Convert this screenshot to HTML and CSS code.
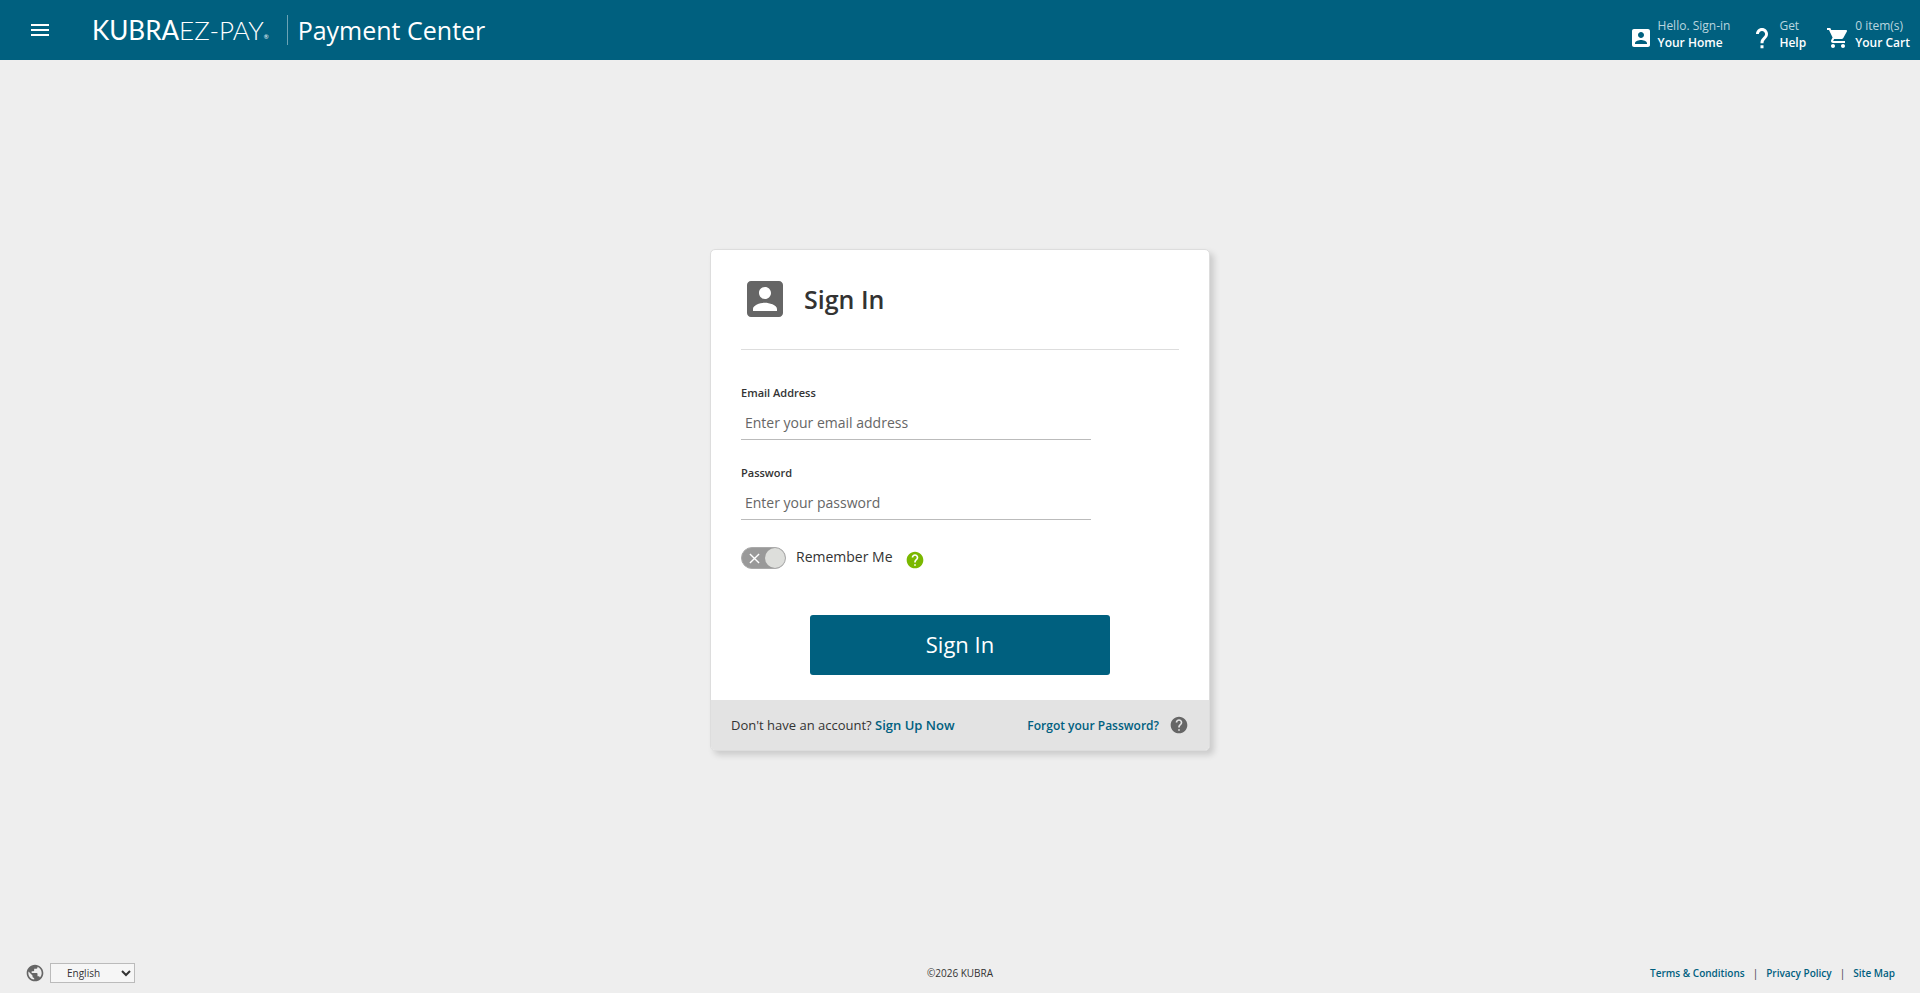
FILE: index.html
```html
<!DOCTYPE html>
<html lang="en">
<head>
    <meta charset="UTF-8">
    <meta name="viewport" content="width=device-width, initial-scale=1.0">
    <title>Sign In - Payment Center</title>
    <link rel="stylesheet" href="styles.css">
</head>
<body>
    <header class="header">
        <div class="header-left">
            <button class="menu-btn" type="button" aria-label="Menu">
                <svg class="icon" viewBox="0 0 24 24"><path d="M3 18h18v-2H3v2zm0-5h18v-2H3v2zm0-7v2h18V6H3z"/></svg>
            </button>
            <a class="logo" href="#"><span class="logo-kubra">KUBRA</span><span class="logo-ezpay">EZ-PAY</span><sup class="logo-reg">®</sup></a>
            <span class="header-title">Payment Center</span>
        </div>
        <nav class="header-nav">
            <a class="nav-item" href="#">
                <svg class="icon" viewBox="0 0 24 24"><path d="M3 5v14c0 1.1.89 2 2 2h14c1.1 0 2-.9 2-2V5c0-1.1-.9-2-2-2H5c-1.11 0-2 .9-2 2zm12 4c0 1.66-1.34 3-3 3s-3-1.34-3-3 1.34-3 3-3 3 1.34 3 3zm-9 8c0-2 4-3.100 6-3.100s6 1.100 6 3.100v1H6v-1z"/></svg>
                <span class="nav-text"><span class="nav-small">Hello. Sign-in</span><strong>Your Home</strong></span>
            </a>
            <a class="nav-item" href="#">
                <svg class="icon" viewBox="0 0 24 24"><path d="M10.500 19.200h3v3h-3zM12 2C8.690 2 6 4.690 6 8h2.900c0-1.710 1.390-3.100 3.100-3.100s3.100 1.390 3.100 3.100c0 3-4.600 3.700-4.600 9.200h3c0-3.900 4.500-4.700 4.500-9.200 0-3.310-2.690-6-6-6z"/></svg>
                <span class="nav-text"><span class="nav-small">Get</span><strong>Help</strong></span>
            </a>
            <a class="nav-item" href="#">
                <svg class="icon" viewBox="0 0 24 24"><path d="M7 18c-1.100 0-1.990.9-1.990 2S5.900 22 7 22s2-.9 2-2-.9-2-2-2zM1 2v2h2l3.600 7.590-1.350 2.450c-.16.280-.25.610-.25.960 0 1.100.9 2 2 2h12v-2H7.420c-.14 0-.25-.11-.25-.25l.03-.12.9-1.630h7.450c.75 0 1.410-.41 1.750-1.030l3.580-6.490c.08-.14.120-.31.120-.48 0-.55-.45-1-1-1H5.210l-.94-2H1zm16 16c-1.100 0-1.990.9-1.990 2s.89 2 1.990 2 2-.9 2-2-.9-2-2-2z"/></svg>
                <span class="nav-text"><span class="nav-small">0 item(s)</span><strong>Your Cart</strong></span>
            </a>
        </nav>
    </header>

    <main class="main">
        <form class="card">
            <div class="card-body">
                <div class="card-head">
                    <svg class="card-icon" viewBox="0 0 24 24"><path d="M3 5v14c0 1.1.89 2 2 2h14c1.1 0 2-.9 2-2V5c0-1.1-.9-2-2-2H5c-1.11 0-2 .9-2 2zm12 4c0 1.66-1.34 3-3 3s-3-1.34-3-3 1.34-3 3-3 3 1.34 3 3zm-9 8c0-2 4-3.100 6-3.100s6 1.100 6 3.100v1H6v-1z"/></svg>
                    <h1>Sign In</h1>
                </div>

                <div class="field">
                    <label for="email">Email Address</label>
                    <input type="email" id="email" placeholder="Enter your email address">
                </div>
                <div class="field">
                    <label for="password">Password</label>
                    <input type="password" id="password" placeholder="Enter your password">
                </div>

                <div class="remember">
                    <span class="toggle">
                        <input type="checkbox" id="remember">
                        <svg class="toggle-x" viewBox="0 0 12 12"><path d="M1 1l10 10M11 1L1 11"/></svg>
                    </span>
                    <label for="remember">Remember Me</label>
                    <button class="help-btn green" type="button" aria-label="About Remember Me">
                        <svg viewBox="0 0 24 24"><path d="M12 2C6.480 2 2 6.480 2 12s4.480 10 10 10 10-4.480 10-10S17.520 2 12 2zm1 17h-2v-2h2v2zm2.070-7.750l-.9.920C13.450 12.900 13 13.500 13 15h-2v-.5c0-1.100.45-2.100 1.170-2.830l1.240-1.260c.37-.36.590-.86.590-1.410 0-1.100-.9-2-2-2s-2 .9-2 2H8c0-2.210 1.790-4 4-4s4 1.790 4 4c0 .88-.36 1.680-.93 2.250z"/></svg>
                    </button>
                </div>

                <button class="submit-btn" type="button">Sign In</button>
            </div>

            <div class="card-foot">
                <p>Don't have an account? <a href="#">Sign Up Now</a></p>
                <div class="forgot">
                    <a href="#">Forgot your Password?</a>
                    <button class="help-btn" type="button" aria-label="Password help">
                        <svg viewBox="0 0 24 24"><path d="M12 2C6.480 2 2 6.480 2 12s4.480 10 10 10 10-4.480 10-10S17.520 2 12 2zm1 17h-2v-2h2v2zm2.070-7.750l-.9.920C13.450 12.900 13 13.500 13 15h-2v-.5c0-1.100.45-2.100 1.170-2.830l1.240-1.260c.37-.36.590-.86.590-1.410 0-1.100-.9-2-2-2s-2 .9-2 2H8c0-2.210 1.790-4 4-4s4 1.790 4 4c0 .88-.36 1.680-.93 2.250z"/></svg>
                    </button>
                </div>
            </div>
        </form>
    </main>

    <footer class="footer">
        <div class="language">
            <svg class="globe" viewBox="0 0 24 24"><path d="M12 2C6.480 2 2 6.480 2 12s4.480 10 10 10 10-4.480 10-10S17.520 2 12 2zm-1 17.930c-3.950-.49-7-3.850-7-7.930 0-.62.080-1.210.210-1.790L9 15v1c0 1.100.9 2 2 2v1.930zm6.900-2.540c-.26-.81-1-1.390-1.900-1.390h-1v-3c0-.55-.45-1-1-1H8v-2h2c.55 0 1-.45 1-1V7h2c1.100 0 2-.9 2-2v-.41c2.930 1.190 5 4.060 5 7.410 0 2.080-.8 3.970-2.100 5.390z"/></svg>
            <select aria-label="Language">
                <option>English</option>
            </select>
        </div>
        <p class="copyright">©2026 KUBRA</p>
        <nav class="footer-links">
            <a href="#">Terms &amp; Conditions</a>
            <span>|</span>
            <a href="#">Privacy Policy</a>
            <span>|</span>
            <a href="#">Site Map</a>
        </nav>
    </footer>
</body>
</html>
```

FILE: styles.css
```css
* {
    margin: 0;
    padding: 0;
    box-sizing: border-box;
}

body {
    display: flex;
    flex-direction: column;
    min-height: 100vh;
    font-family: 'Open Sans', sans-serif;
    font-size: 14px;
    background: #eeeeee;
    color: #333333;
}

a {
    color: #00607f;
    font-weight: 600;
    text-decoration: none;
}

button {
    border: none;
    background: none;
    font-family: inherit;
    cursor: pointer;
}

svg {
    display: block;
    fill: currentColor;
}

.icon {
    width: 24px;
    height: 24px;
}

/* Header */
.header {
    display: flex;
    justify-content: space-between;
    height: 60px;
    padding: 0 10px 0 28px;
    background: #00607f;
    color: #ffffff;
}

.header a {
    color: #ffffff;
}

.header-left {
    display: flex;
    align-items: center;
}

.menu-btn {
    color: #ffffff;
}

.logo {
    display: flex;
    align-items: center;
    margin-left: 40px;
    font-family: Lato, sans-serif;
    font-size: 26px;
    line-height: 30px;
}

.logo-kubra {
    font-weight: 400;
}

.logo-ezpay {
    font-weight: 300;
}

.logo-reg {
    align-self: flex-end;
    font-size: 6px;
    line-height: 16px;
    font-weight: 400;
}

.header-title {
    margin-left: 18px;
    padding-left: 10px;
    border-left: 1px solid #6ba3b5;
    font-size: 25px;
    line-height: 30px;
}

.header-nav {
    display: flex;
    align-items: flex-start;
    gap: 20px;
    padding-top: 17px;
}

.nav-item {
    display: flex;
    align-items: flex-end;
    gap: 5px;
    font-size: 12px;
    line-height: 17px;
}

.nav-item .icon {
    margin-bottom: 1px;
}

.nav-text {
    display: flex;
    flex-direction: column;
}

.nav-small {
    font-weight: 400;
    color: #b9d6df;
}

.nav-text strong {
    font-weight: 600;
}

/* Sign in card */
.main {
    flex: 1;
    display: flex;
    align-items: center;
    justify-content: center;
}

.card {
    width: 500px;
    border: 1px solid #dddddd;
    border-radius: 5px;
    background: #ffffff;
    box-shadow: 4px 4px 6px rgba(0, 0, 0, 0.15);
    overflow: hidden;
}

.card-body {
    padding: 0 30px 25px;
}

.card-head {
    display: flex;
    align-items: center;
    gap: 15px;
    height: 100px;
    padding-bottom: 2px;
    border-bottom: 1px solid #dddddd;
}

.card-icon {
    width: 48px;
    height: 48px;
    color: #666666;
}

.card-head h1 {
    font-size: 25px;
    font-weight: 600;
}

.field {
    display: flex;
    flex-direction: column;
    max-width: 350px;
    margin-top: 20px;
}

.card-head + .field {
    margin-top: 30px;
}

.field label {
    font-size: 11px;
    line-height: 25px;
    font-weight: 600;
}

.field input {
    height: 35px;
    padding: 0 4px;
    border: none;
    border-bottom: 1px solid #bbbbbb;
    background: none;
    font-family: inherit;
    font-size: 14px;
    color: #333333;
    outline: none;
}

.field input::placeholder {
    color: #666666;
}

.remember {
    display: flex;
    align-items: center;
    margin-top: 25px;
    height: 25px;
}

.toggle {
    position: relative;
    width: 45px;
    height: 22px;
}

.toggle input {
    display: flex;
    justify-content: flex-end;
    width: 45px;
    height: 22px;
    appearance: none;
    border: 1px solid #aaaaaa;
    border-radius: 11px;
    background: #999999;
    cursor: pointer;
}

.toggle input::after {
    content: "";
    width: 20px;
    height: 20px;
    border-radius: 50%;
    background: #dddedb;
}

.toggle-x {
    position: absolute;
    left: 8px;
    top: 6px;
    width: 11px;
    height: 11px;
    stroke: #ffffff;
    stroke-width: 1.5;
    pointer-events: none;
}

.remember label {
    margin: 0 12px 0 10px;
    padding-bottom: 2px;
}

.help-btn {
    color: #666666;
}

.help-btn svg {
    width: 20px;
    height: 20px;
}

.help-btn.green {
    align-self: flex-end;
    color: #7ab800;
}

.submit-btn {
    display: block;
    width: 300px;
    height: 60px;
    margin: 45px auto 0;
    padding-bottom: 2px;
    border-radius: 3px;
    background: #00607f;
    color: #ffffff;
    font-size: 22px;
}

.card-foot {
    display: flex;
    align-items: center;
    justify-content: space-between;
    height: 50px;
    padding: 0 20px;
    background: #e3e3e3;
    font-size: 13px;
}

.forgot {
    display: flex;
    align-items: center;
    gap: 10px;
    font-size: 12px;
}

/* Footer */
.footer {
    display: grid;
    grid-template-columns: 1fr auto 1fr;
    align-items: center;
    padding: 23px 25px 10px;
    font-size: 10px;
}

.language {
    display: flex;
    align-items: center;
    gap: 5px;
}

.globe {
    width: 20px;
    height: 20px;
    color: #666666;
}

.language select {
    width: 85px;
    height: 20px;
    padding-left: 12px;
    border: 1px solid #bbbbbb;
    background-color: #f6f6f6;
    font-family: inherit;
    font-size: 10px;
    color: #333333;
}

.footer-links {
    display: flex;
    justify-content: flex-end;
    gap: 8px;
}
```
